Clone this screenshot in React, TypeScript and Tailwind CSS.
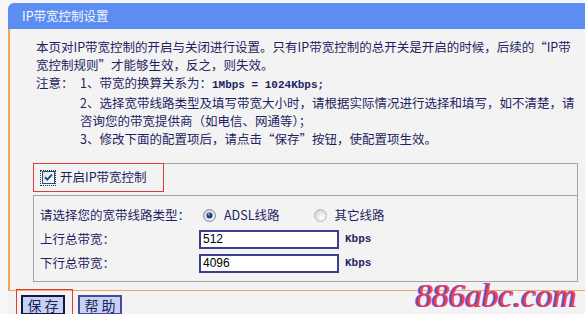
const cjk = "font-['Noto_Sans_CJK_SC','Noto_Sans',sans-serif]";

function CheckBox() {
  return (
    <div className="w-[16px] h-[16px] border border-dotted border-[#333] flex items-center justify-center">
      <svg width="13" height="13" viewBox="0 0 13 13">
        <defs>
          <linearGradient id="cbg" x1="0" y1="0" x2="1" y2="1">
            <stop offset="0" stopColor="#dcdcd6" />
            <stop offset="1" stopColor="#ffffff" />
          </linearGradient>
        </defs>
        <rect x="0.5" y="0.5" width="12" height="12" fill="url(#cbg)" stroke="#1c5180" />
        <path d="M3 6.2 L5.2 8.6 L10 3.6" fill="none" stroke="#1f3f8f" strokeWidth="1.8" />
      </svg>
    </div>
  );
}

function Radio(props: { checked?: boolean }) {
  const id = props.checked ? "rg1" : "rg0";
  return (
    <svg width="13" height="13" viewBox="0 0 13 13">
      <defs>
        <radialGradient id={id} cx="0.6" cy="0.65" r="0.7">
          <stop offset="0" stopColor="#ffffff" />
          <stop offset="1" stopColor="#d0d0cc" />
        </radialGradient>
      </defs>
      <circle cx="6.5" cy="6.5" r="6" fill={`url(#${id})`} stroke={props.checked ? "#7b8ea8" : "#b8b8b8"} />
      {props.checked && <circle cx="6.5" cy="6.5" r="3" fill="#1e3c8c" />}
      {props.checked && <circle cx="5.8" cy="5.6" r="1" fill="#8fb0e8" />}
    </svg>
  );
}

export default function App() {
  return (
    <div className={`relative w-[585px] h-[314px] overflow-hidden bg-[#f6f6f6] text-[12.5px] text-[#1f1f62] ${cjk}`}>
      <div className="pt-[3px] pl-[8px]">
        <div className="h-[26px] bg-[#5b8ef0] rounded-tl-[6px] pl-[14px] flex items-center text-[12.5px] text-[#f4f7ff]">
          IP带宽控制设置
        </div>
        <div className="h-[261px] bg-[#f3f3f3] border-l-2 border-[#f2a45a] pl-[23px] pt-[9px]">
          <div className="ml-[3px] leading-[18px] whitespace-nowrap">
            <div>本页对IP带宽控制的开启与关闭进行设置。只有IP带宽控制的总开关是开启的时候，后续的“IP带</div>
            <div>宽控制规则”才能够生效，反之，则失效。</div>
            <div className="flex">
              <span className="w-[44px]">注意：</span>
              <span>
                1、带宽的换算关系为：
                <span className="font-['Liberation_Mono',monospace] text-[11px] font-bold whitespace-pre">1Mbps = 1024Kbps;</span>
              </span>
            </div>
            <div className="pl-[44px]">2、选择宽带线路类型及填写带宽大小时，请根据实际情况进行选择和填写，如不清楚，请</div>
            <div className="pl-[44px]">咨询您的带宽提供商（如电信、网通等）；</div>
            <div className="pl-[44px]">3、修改下面的配置项后，请点击“保存”按钮，使配置项生效。</div>
          </div>

          <div className="mt-[15px] w-[545px]">
            <div className="h-[32px] border-t border-r border-[#a4a4a4]">
              <div className="-mt-px w-[131px] h-[29px] border border-[#e23a3a] pl-[6px] flex items-center gap-[4px]">
                <CheckBox />
                <span>开启IP带宽控制</span>
              </div>
            </div>
            <div className="h-[87px] border border-[#a4a4a4] pl-[6px] pt-[7px]">
              <div className="h-[24px] flex items-center">
                <span className="w-[159px]">请选择您的宽带线路类型：</span>
                <span className="ml-[4px] flex items-center"><Radio checked /></span>
                <span className="ml-[8px]">ADSL线路</span>
                <span className="ml-[35px] flex items-center"><Radio /></span>
                <span className="ml-[7px]">其它线路</span>
              </div>
              <div className="h-[24px] flex items-center">
                <span className="w-[159px]">上行总带宽：</span>
                <div className="w-[140px] h-[19px] bg-white border-2 border-[#3d3d8f] pl-[2px] flex items-center font-['Liberation_Sans',sans-serif] text-[12px] text-black">512</div>
                <span className="ml-[6px] font-['Liberation_Mono',monospace] text-[11px] font-bold">Kbps</span>
              </div>
              <div className="h-[24px] flex items-center">
                <span className="w-[159px]">下行总带宽：</span>
                <div className="w-[140px] h-[19px] bg-white border-2 border-[#3d3d8f] pl-[2px] flex items-center font-['Liberation_Sans',sans-serif] text-[12px] text-black">4096</div>
                <span className="ml-[6px] font-['Liberation_Mono',monospace] text-[11px] font-bold">Kbps</span>
              </div>
            </div>
          </div>
        </div>
        <div className="h-[30px] border-t border-[#eea462] bg-[#f3f3f3] pl-[8px] flex items-start">
          <div className="-mt-[2px] w-[57px] h-[30px] border border-[#e23a3a] pl-[4px] pt-[5px]">
            <button className="w-[44px] h-[20px] bg-[#c6d2f2] border-2 border-[#15154a] text-[14px] leading-[16px] text-[#1f1f62] whitespace-pre">保 存</button>
          </div>
          <button className="ml-[5px] mt-[4px] w-[44px] h-[20px] bg-[#c6d2f2] border-2 border-[#4848a0] text-[14px] leading-[16px] text-[#1f1f62] whitespace-pre">帮 助</button>
        </div>
      </div>
      <div className="absolute right-[8px] bottom-[1px] font-['Liberation_Serif',serif] italic text-[33px] leading-none text-[#f2424e] [text-shadow:-2px_0_0_#5258ee]">
        886abc.com
      </div>
    </div>
  );
}
